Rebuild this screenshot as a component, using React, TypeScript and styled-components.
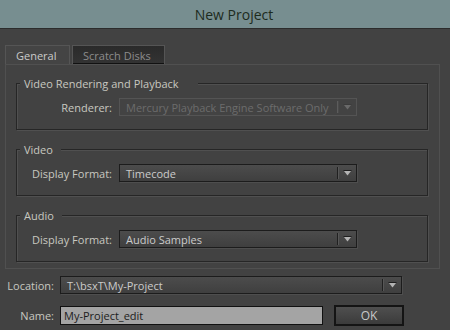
import styled, { createGlobalStyle } from "styled-components";

const GlobalStyle = createGlobalStyle`
  html, body {
    margin: 0;
    padding: 0;
    background: #424242;
  }
  * {
    box-sizing: border-box;
  }
`;

const Window = styled.div`
  width: 450px;
  height: 330px;
  background: #424242;
  display: flex;
  flex-direction: column;
  font-family: "Open Sans", "Noto Sans", sans-serif;
  font-size: 11px;
  color: #c8c8c0;
  overflow: hidden;
`;

const TitleBar = styled.div`
  height: 29px;
  flex: none;
  background: #778e90;
  border-bottom: 1px solid #2c2c2c;
  display: flex;
  align-items: center;
  justify-content: center;
  padding-left: 18px;
  color: #1d2b1d;
  font-size: 14px;
`;

const Body = styled.div`
  padding: 16px 10px 0 5px;
  display: flex;
  flex-direction: column;
`;

const TabBar = styled.div`
  display: flex;
  gap: 2px;
  height: 19px;
`;

const Tab = styled.div<{ $active?: boolean; $w: number }>`
  width: ${(p) => p.$w}px;
  height: 19px;
  display: flex;
  align-items: center;
  padding-left: 10px;
  border: 1px solid #555555;
  border-bottom: none;
  background: ${(p) =>
    p.$active ? "#444444" : "linear-gradient(#2a2a2a, #333333)"};
  color: ${(p) => (p.$active ? "#cacaca" : "#8c8c8c")};
  box-shadow: ${(p) => (p.$active ? "none" : "inset 0 -1px 0 #111")};
`;

const Panel = styled.div`
  width: 435px;
  height: 205px;
  border: 1px solid #505050;
  padding: 18px 11px 0 10px;
  display: flex;
  flex-direction: column;
`;

const Group = styled.div<{ $gap: number }>`
  margin-top: ${(p) => p.$gap}px;
  border: 1px solid #262626;
  box-shadow: 1px 1px 0 #505050, inset 1px 1px 0 #505050;
  padding-bottom: 13px;
  display: flex;
  flex-direction: column;
`;

const GroupTitle = styled.div<{ $padRight?: number }>`
  align-self: flex-start;
  margin: -8px 0 0 3px;
  padding: 0 ${(p) => p.$padRight ?? 8}px 0 4px;
  line-height: 15px;
  background: #424242;
  color: #c8c8c0;
  font-size: 11px;
`;

const Row = styled.div`
  margin-top: 7px;
  display: grid;
  grid-template-columns: 95px 238px;
  column-gap: 7px;
  align-items: center;
`;

const Label = styled.div`
  text-align: right;
  white-space: nowrap;
`;

const SelectBox = styled.div<{ $disabled?: boolean; $w?: number }>`
  width: ${(p) => (p.$w ? `${p.$w}px` : "auto")};
  height: 18px;
  display: flex;
  align-items: center;
  border: 1px solid ${(p) => (p.$disabled ? "#545454" : "#1c1c1c")};
  background: ${(p) =>
    p.$disabled ? "#434343" : "linear-gradient(#4c4c4c, #3f3f3f)"};
  color: ${(p) => (p.$disabled ? "#6c6c6c" : "#cbcbcb")};
  box-shadow: ${(p) => (p.$disabled ? "none" : "1px 1px 0 #4e4e4e")};
`;

const SelectText = styled.div`
  flex: 1;
  padding-left: 6px;
  white-space: nowrap;
  overflow: hidden;
`;

const Divider = styled.div<{ $disabled?: boolean }>`
  width: 2px;
  height: 12px;
  border-left: 1px solid ${(p) => (p.$disabled ? "#5c5c5c" : "#202020")};
  border-right: 1px solid ${(p) => (p.$disabled ? "#4a4a4a" : "#575757")};
`;

const ArrowBox = styled.div`
  width: 17px;
  display: flex;
  align-items: center;
  justify-content: center;
`;

const Arrow = ({ disabled }: { disabled?: boolean }) => (
  <svg width="9" height="6" viewBox="0 0 9 6">
    <rect x="0.5" y="0" width="8" height="1" fill={disabled ? "#3c3c3c" : "#1e1e1e"} />
    <path d="M1 1 H8 L4.5 5.5 Z" fill={disabled ? "#6a6a6a" : "#b4b4b4"} />
  </svg>
);

const Select = ({
  value,
  disabled,
  width,
}: {
  value: string;
  disabled?: boolean;
  width?: number;
}) => (
  <SelectBox $disabled={disabled} $w={width}>
    <SelectText>{value}</SelectText>
    <Divider $disabled={disabled} />
    <ArrowBox>
      <Arrow disabled={disabled} />
    </ArrowBox>
  </SelectBox>
);

const Form = styled.div`
  margin-top: 7px;
  display: grid;
  grid-template-columns: 49px auto;
  column-gap: 6px;
  row-gap: 11px;
  align-items: center;
`;

const NameRow = styled.div`
  display: flex;
  align-items: center;
  gap: 11px;
`;

const TextInput = styled.div`
  width: 263px;
  height: 19px;
  background: #a4a4a4;
  border: 1px solid #111111;
  color: #1c1c1c;
  padding-left: 3px;
  display: flex;
  align-items: center;
`;

const Button = styled.div`
  width: 70px;
  height: 21px;
  border: 2px solid #141414;
  background: linear-gradient(#4f4f4f, #3b3b3b);
  color: #c8c8c8;
  display: flex;
  align-items: center;
  justify-content: center;
  font-size: 12px;
`;

export default function App() {
  return (
    <>
      <GlobalStyle />
      <Window>
        <TitleBar>New Project</TitleBar>
        <Body>
          <TabBar>
            <Tab $active $w={65}>
              General
            </Tab>
            <Tab $w={93}>Scratch Disks</Tab>
          </TabBar>
          <Panel>
            <Group $gap={0}>
              <GroupTitle $padRight={19}>Video Rendering and Playback</GroupTitle>
              <Row>
                <Label>Renderer:</Label>
                <Select value="Mercury Playback Engine Software Only" disabled />
              </Row>
            </Group>
            <Group $gap={19}>
              <GroupTitle>Video</GroupTitle>
              <Row>
                <Label>Display Format:</Label>
                <Select value="Timecode" />
              </Row>
            </Group>
            <Group $gap={19}>
              <GroupTitle>Audio</GroupTitle>
              <Row>
                <Label>Display Format:</Label>
                <Select value="Audio Samples" />
              </Row>
            </Group>
          </Panel>
          <Form>
            <Label>Location:</Label>
            <Select value="T:\bsxT\My-Project" width={342} />
            <Label>Name:</Label>
            <NameRow>
              <TextInput>My-Project_edit</TextInput>
              <Button>OK</Button>
            </NameRow>
          </Form>
        </Body>
      </Window>
    </>
  );
}
